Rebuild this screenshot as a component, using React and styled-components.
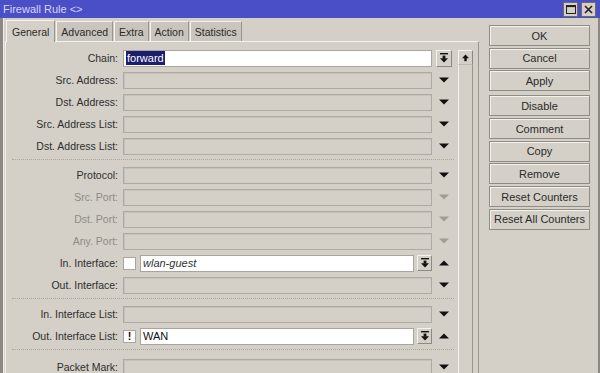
import React from "react"
import styled, { createGlobalStyle } from "styled-components"

const GlobalStyle = createGlobalStyle`
  html, body {
    margin: 0;
    padding: 0;
    background: #d4d0c8;
  }
  body {
    font-family: "Liberation Sans", Arial, sans-serif;
    font-size: 10.5px;
    color: #2e2e2e;
  }
`

const tabs = ["General", "Advanced", "Extra", "Action", "Statistics"]

// one entry per row in the General tab, "sep" draws the dotted divider
const rows = [
  { label: "Chain:", kind: "chain", value: "forward" },
  { label: "Src. Address:" },
  { label: "Dst. Address:" },
  { label: "Src. Address List:" },
  { label: "Dst. Address List:" },
  "sep",
  { label: "Protocol:" },
  { label: "Src. Port:", dim: true },
  { label: "Dst. Port:", dim: true },
  { label: "Any. Port:", dim: true },
  { label: "In. Interface:", kind: "check", value: "wlan-guest", italic: true },
  { label: "Out. Interface:" },
  "sep",
  { label: "In. Interface List:" },
  { label: "Out. Interface List:", kind: "check", value: "WAN", bang: true },
  "sep",
  { label: "Packet Mark:" },
]

const actions = [
  ["OK", "Cancel", "Apply"],
  ["Disable", "Comment", "Copy", "Remove", "Reset Counters", "Reset All Counters"],
]

const DownArrow = ({ dim }) => (
  <svg width="10" height="6" viewBox="0 0 10 6">
    <polygon points="0,0.5 10,0.5 5,5.5" fill={dim ? "#a09c96" : "#111"} />
  </svg>
)

const UpArrow = () => (
  <svg width="10" height="6" viewBox="0 0 10 6">
    <polygon points="0,5.5 10,5.5 5,0.5" fill="#111" />
  </svg>
)

const PickIcon = () => (
  <svg width="8" height="10" viewBox="0 0 8 10">
    <rect x="0" y="0" width="8" height="1.4" fill="#111" />
    <rect x="2.6" y="2.6" width="2.8" height="3" fill="#111" />
    <polygon points="0,5.2 8,5.2 4,9.6" fill="#111" />
  </svg>
)

const ScrollUpIcon = () => (
  <svg width="7" height="8" viewBox="0 0 7 8">
    <polygon points="0,4.2 7,4.2 3.5,0.4" fill="#111" />
    <rect x="2.3" y="4" width="2.4" height="3.2" fill="#111" />
  </svg>
)

const App = () => {
  return (
    <>
      <GlobalStyle />
      <Window>
        <TitleBar>
          <TitleText>Firewall Rule &lt;&gt;</TitleText>
          <TitleButtons>
            <TitleButton>
              <svg width="10" height="9" viewBox="0 0 10 9">
                <rect x="0.5" y="0.5" width="9" height="8" fill="none" stroke="#222" />
                <rect x="0.5" y="0.5" width="9" height="1.6" fill="#222" />
              </svg>
            </TitleButton>
            <TitleButton>
              <svg width="9" height="9" viewBox="0 0 9 9">
                <path d="M1 1 L8 8 M8 1 L1 8" stroke="#222" strokeWidth="1.6" />
              </svg>
            </TitleButton>
          </TitleButtons>
        </TitleBar>

        <Body>
          <LeftSide>
            <TabStrip>
              {tabs.map((t, i) => (
                <Tab key={t} $active={i === 0}>
                  {t}
                </Tab>
              ))}
            </TabStrip>
            <Panel>
              <Form>
                {rows.map((r, i) =>
                  r === "sep" ? (
                    <Separator key={i} $last={i === rows.length - 2} />
                  ) : (
                    <Row key={i}>
                      <Label $dim={r.dim}>{r.label}</Label>
                      <Field>
                        {r.kind === "chain" && (
                          <WhiteInput>
                            <Selected>{r.value}</Selected>
                          </WhiteInput>
                        )}
                        {r.kind === "check" && (
                          <>
                            <CheckBox>{r.bang ? "!" : ""}</CheckBox>
                            <WhiteInput $italic={r.italic}>{r.value}</WhiteInput>
                            <PickButton>
                              <PickIcon />
                            </PickButton>
                          </>
                        )}
                        {!r.kind && <EmptyInput />}
                      </Field>
                      <ArrowCell>
                        {r.kind === "chain" && (
                          <ChainButton>
                            <PickIcon />
                          </ChainButton>
                        )}
                        {r.kind === "check" && <UpArrow />}
                        {!r.kind && <DownArrow dim={r.dim} />}
                      </ArrowCell>
                    </Row>
                  )
                )}
              </Form>
              <ScrollColumn>
                <ScrollButton>
                  <ScrollUpIcon />
                </ScrollButton>
                <ScrollTrack />
              </ScrollColumn>
            </Panel>
          </LeftSide>

          <ButtonColumn>
            {actions.map((group, gi) => (
              <ButtonGroup key={gi}>
                {group.map((b) => (
                  <ActionButton key={b}>{b}</ActionButton>
                ))}
              </ButtonGroup>
            ))}
          </ButtonColumn>
        </Body>
      </Window>
    </>
  )
}

export default App

const Window = styled.div`
  width: 600px;
  height: 373px;
  overflow: hidden;
  display: flex;
  flex-direction: column;
  background: #d4d0c8;
`

const TitleBar = styled.div`
  height: 18px;
  flex: none;
  display: flex;
  align-items: center;
  justify-content: space-between;
  background: #4a4fc7;
  padding: 0 4px 0 3px;
`

const TitleText = styled.div`
  color: #d6d6f6;
  font-size: 11px;
  margin-top: -1px;
`

const TitleButtons = styled.div`
  display: flex;
  gap: 3px;
`

const TitleButton = styled.div`
  width: 13px;
  height: 13px;
  background: #d4d0c8;
  border: 1px solid #6e6b66;
  display: flex;
  align-items: center;
  justify-content: center;
`

const Body = styled.div`
  flex: 1;
  display: flex;
  min-height: 0;
  border-left: 3px solid #8c8984;
  border-right: 2px solid #8c8984;
  box-shadow: inset 1px 0 0 #f2f0ec;
`

const LeftSide = styled.div`
  width: 476px;
  padding-top: 2px;
  display: flex;
  flex-direction: column;
`

const TabStrip = styled.div`
  display: flex;
  align-items: flex-end;
  height: 22px;
  padding-left: 3px;
  gap: 1px;
`

const Tab = styled.div`
  height: ${(p) => (p.$active ? "22px" : "20px")};
  padding: 0 ${(p) => (p.$active ? "5px" : "4px")};
  display: flex;
  align-items: center;
  box-sizing: border-box;
  background: ${(p) => (p.$active ? "#d4d0c8" : "#c9c5bd")};
  border: 1px solid #f4f2ee;
  border-right-color: #9a968f;
  border-bottom: none;
  margin-bottom: ${(p) => (p.$active ? "-1px" : "0")};
  position: relative;
  z-index: ${(p) => (p.$active ? 1 : 0)};
  font-size: 10.5px;
  color: #2a2a2a;
`

const Panel = styled.div`
  flex: 1;
  display: flex;
  border-top: 1px solid #f4f2ee;
  border-left: 1px solid #f4f2ee;
  border-right: 1px solid #9a968f;
  margin-left: 2px;
  padding-right: 5px;
`

const Form = styled.div`
  flex: 1;
  padding-top: 5px;
  display: flex;
  flex-direction: column;
`

const Row = styled.div`
  height: 22px;
  flex: none;
  display: flex;
  align-items: center;
`

const Label = styled.div`
  width: 112px;
  text-align: right;
  padding-right: 5px;
  white-space: nowrap;
  color: ${(p) => (p.$dim ? "#8e8b86" : "#2e2e2e")};
`

const Field = styled.div`
  width: 309px;
  height: 17px;
  display: flex;
  align-items: center;
  gap: 3px;
`

const EmptyInput = styled.div`
  flex: 1;
  height: 17px;
  box-sizing: border-box;
  border: 1px solid #aeaaa3;
  box-shadow: inset 1px 1px 0 #c6c2ba;
`

const WhiteInput = styled.div`
  flex: 1;
  height: 17px;
  box-sizing: border-box;
  background: #fff;
  border: 1px solid #a9a59e;
  padding: 0 2px;
  display: flex;
  align-items: center;
  font-style: ${(p) => (p.$italic ? "italic" : "normal")};
  color: ${(p) => (p.$italic ? "#333" : "#111")};
  font-size: 11px;
`

const Selected = styled.span`
  background: #1b1e6c;
  color: #fff;
  padding: 0 1px;
  line-height: 14px;
`

const CheckBox = styled.div`
  width: 13px;
  height: 13px;
  box-sizing: border-box;
  background: #fff;
  border: 1px solid #a9a59e;
  margin-right: 1px;
  display: flex;
  align-items: center;
  justify-content: center;
  font-weight: bold;
  font-size: 11px;
  line-height: 1;
  color: #111;
`

const PickButton = styled.div`
  width: 15px;
  height: 16px;
  box-sizing: border-box;
  border: 1px solid #f4f2ee;
  border-right-color: #8c8984;
  border-bottom-color: #8c8984;
  display: flex;
  align-items: center;
  justify-content: center;
`

const ChainButton = styled(PickButton)`
  width: 16px;
  height: 17px;
`

const ArrowCell = styled.div`
  width: 20px;
  padding-left: 2px;
  display: flex;
  align-items: center;
  justify-content: center;
`

const Separator = styled.div`
  flex: none;
  box-sizing: border-box;
  margin: 2px 2px 0 6px;
  height: ${(p) => (p.$last ? "7px" : "5px")};
  border-top: 1px dotted #aaa69f;
`

const ScrollColumn = styled.div`
  width: 15px;
  margin-top: 8px;
  margin-left: 2px;
  display: flex;
  flex-direction: column;
`

const ScrollButton = styled.div`
  height: 15px;
  box-sizing: border-box;
  border: 1px solid #f4f2ee;
  border-right-color: #8c8984;
  border-bottom-color: #bdb9b1;
  display: flex;
  align-items: center;
  justify-content: center;
`

const ScrollTrack = styled.div`
  flex: 1;
  border-left: 1px solid #f4f2ee;
  border-right: 1px solid #9a968f;
`

const ButtonColumn = styled.div`
  margin: 7px 0 0 10px;
  width: 101px;
  display: flex;
  flex-direction: column;
  gap: 4px;
`

const ButtonGroup = styled.div`
  display: flex;
  flex-direction: column;
  gap: 1.7px;
`

const ActionButton = styled.div`
  height: 21px;
  box-sizing: border-box;
  border: 1px solid #8f8c86;
  box-shadow: inset 1px 1px 0 #f4f2ee;
  display: flex;
  align-items: center;
  justify-content: center;
  color: #2a2a2a;
  font-size: 11px;
  white-space: nowrap;
`
